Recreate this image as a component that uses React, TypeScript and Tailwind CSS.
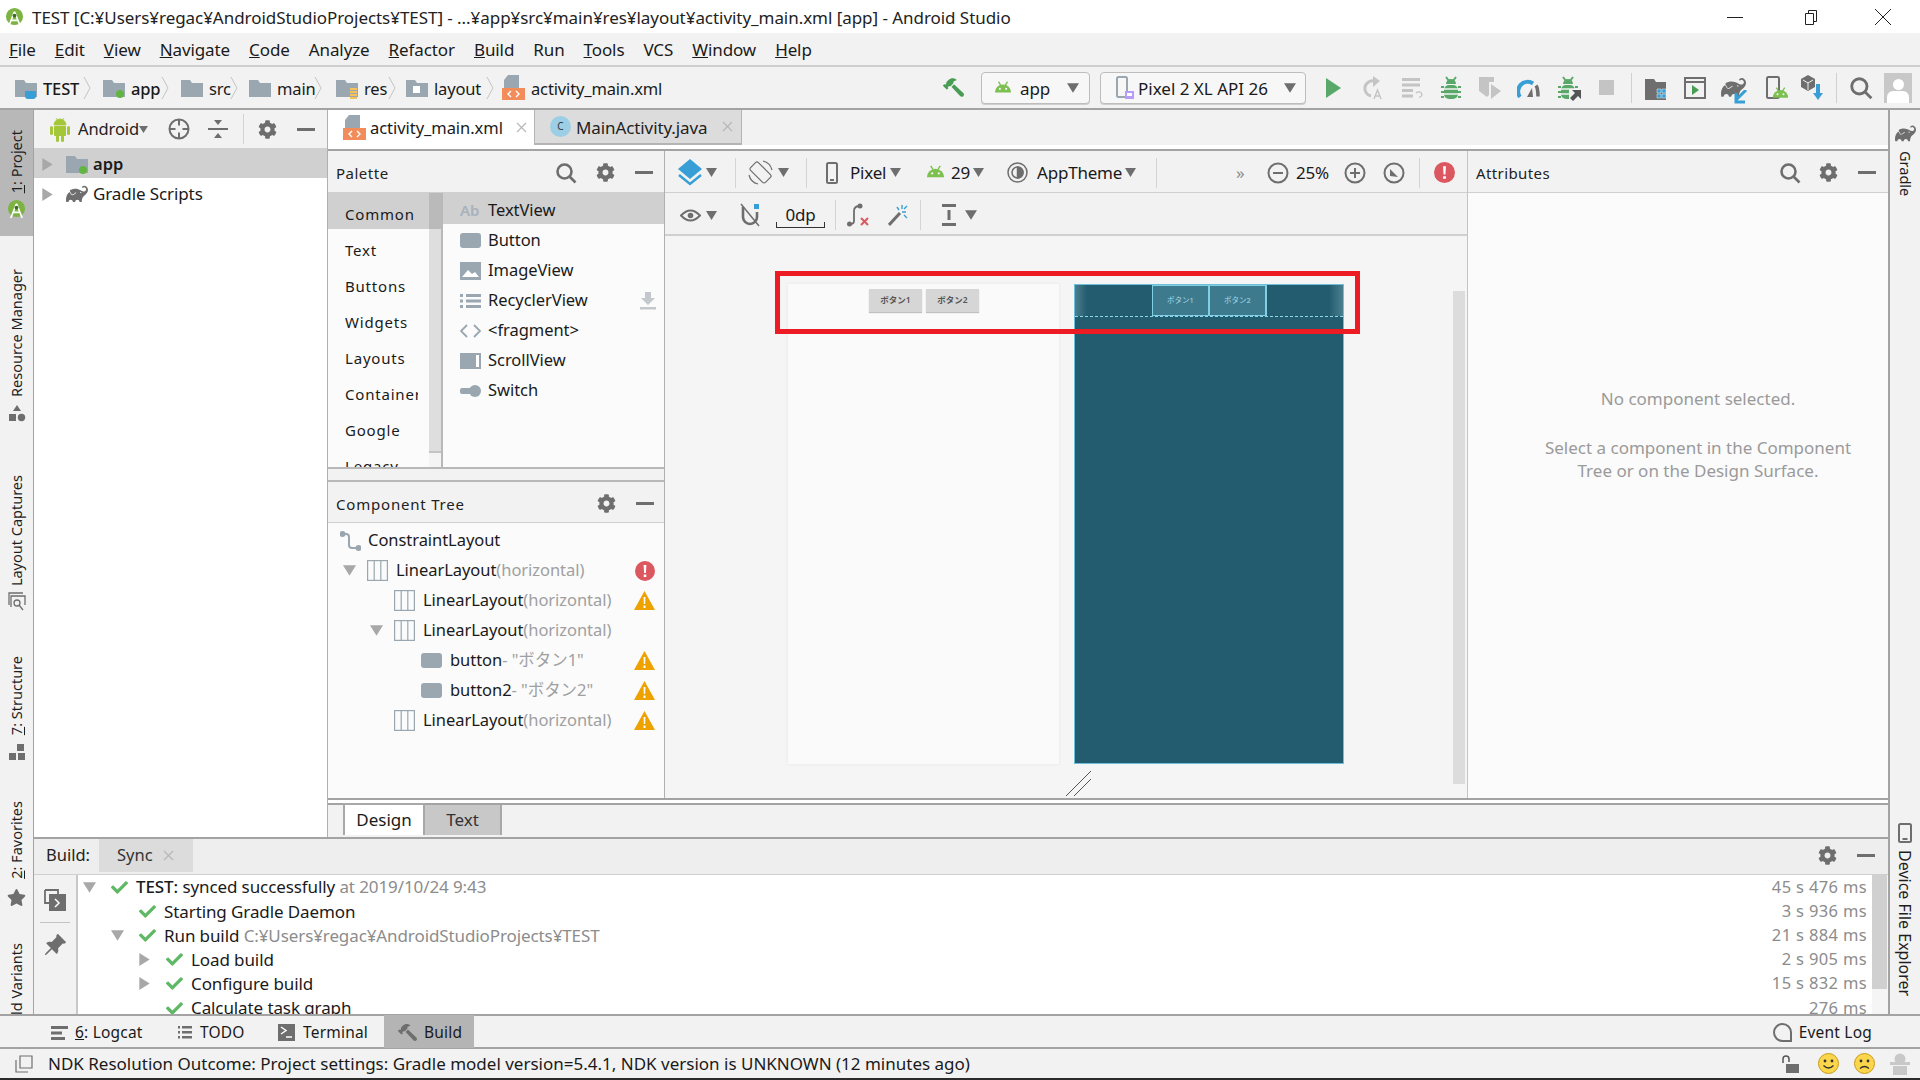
import { FaCog, FaHammer, FaStar, FaCheck } from 'react-icons/fa'
import { BsPinAngleFill } from 'react-icons/bs'
import { SiGradle } from 'react-icons/si'

const gray = '#6e6e6e'
const iconGray = '#9aa7b0'

function Tri({ dir = 'down', size = 10, color = '#6e6e6e', className = '' }: { dir?: 'down' | 'right'; size?: number; color?: string; className?: string }) {
  return (
    <svg width={size} height={size} viewBox="0 0 10 10" className={`shrink-0 ${className}`}>
      <path d={dir === 'down' ? 'M0 1h10L5 9z' : 'M1 0l8 5-8 5z'} fill={color} />
    </svg>
  )
}

function Gear({ size = 19, className = '' }: { size?: number; className?: string }) {
  return <FaCog size={size} color={gray} className={`shrink-0 ${className}`} />
}

function Minus({ className = '' }: { className?: string }) {
  return <div className={`h-[3px] w-[18px] shrink-0 bg-[#6e6e6e] ${className}`} />
}

function Search({ size = 22, className = '' }: { size?: number; className?: string }) {
  return (
    <svg width={size} height={size} viewBox="0 0 22 22" fill="none" stroke="#6e6e6e" strokeWidth="2.6" className={`shrink-0 ${className}`}>
      <circle cx="9.5" cy="9.5" r="7" />
      <path d="M14.5 14.5l6 6" />
    </svg>
  )
}

function Folder({ dot, cup, stack, square }: { dot?: boolean; cup?: boolean; stack?: boolean; square?: boolean }) {
  return (
    <svg width="22" height="22" viewBox="0 0 22 22" className="shrink-0">
      <path d="M0 3h9l2 3h11v14H0z" fill={iconGray} />
      {dot && <circle cx="17" cy="17" r="4" fill="#62b543" />}
      {cup && <path d="M10 14h11v5a3 3 0 0 1-3 3h-5a3 3 0 0 1-3-3z" fill="#389fd6" />}
      {stack && <path d="M14 11h7v2h-7zM14 14h7v2h-7zM14 17h7v2h-7zM14 20h7v2h-7z" fill="#f4c15a" />}
      {square && <rect x="7" y="9" width="7" height="7" fill="#fff" />}
    </svg>
  )
}

function XmlIcon() {
  return (
    <svg width="23" height="25" viewBox="0 0 23 25" className="shrink-0">
      <path d="M6 0h11v13H2V5z" fill={iconGray} />
      <rect x="0" y="13" width="23" height="12" fill="#f28c5a" />
      <path d="M9 16l-3 3 3 3M14 16l3 3-3 3" stroke="#fff" strokeWidth="1.4" fill="none" />
    </svg>
  )
}

function Droid({ size = 20 }: { size?: number }) {
  return (
    <svg width={size} height={size} viewBox="0 0 20 20" className="shrink-0">
      <path d="M1 15a9 9 0 0 1 18 0z" fill="#7cc04f" />
      <path d="M5 3l2.5 4M15 3l-2.5 4" stroke="#7cc04f" strokeWidth="1.5" />
      <circle cx="6.5" cy="11" r="1.2" fill="#f2f2f2" />
      <circle cx="13.5" cy="11" r="1.2" fill="#f2f2f2" />
    </svg>
  )
}

function Robot() {
  return (
    <svg width="20" height="25" viewBox="0 0 20 25" fill="#a4c639" className="shrink-0">
      <path d="M4 8a6 6 0 0 1 12 0zM6 1l2 3M14 1l-2 3" stroke="#a4c639" strokeWidth=".8" />
      <rect x="4" y="9" width="12" height="10" rx="1" />
      <rect x="0" y="9" width="3" height="9" rx="1.5" />
      <rect x="17" y="9" width="3" height="9" rx="1.5" />
      <rect x="6" y="18" width="3" height="7" rx="1.5" />
      <rect x="11" y="18" width="3" height="7" rx="1.5" />
    </svg>
  )
}

function Bug() {
  return (
    <svg width="20" height="24" viewBox="0 0 20 24" fill="#59a869" className="shrink-0">
      <path d="M5 1l3 4M15 1l-3 4" stroke="#59a869" strokeWidth="2" />
      <path d="M5 8a5 5 0 0 1 10 0z" />
      <rect x="3" y="9" width="14" height="14" rx="5" />
      <path d="M3 13h14M3 18h14" stroke="#f2f2f2" strokeWidth="1.6" />
      <path d="M0 11h3M0 16h3M0 21h3M17 11h3M17 16h3M17 21h3" stroke="#59a869" strokeWidth="2" />
    </svg>
  )
}

function Studio({ size = 20 }: { size?: number }) {
  return (
    <svg width={size} height={size} viewBox="0 0 20 20" className="shrink-0">
      <circle cx="10" cy="9" r="9" fill="#7cb342" />
      <path d="M10 4L4 19M10 4l6 15M6 13h8" stroke="#fff" strokeWidth="1.8" fill="none" />
      <circle cx="10" cy="8" r="2" fill="#3d6b22" />
    </svg>
  )
}

function Err({ size = 20 }: { size?: number }) {
  return (
    <svg width={size} height={size} viewBox="0 0 20 20" className="shrink-0">
      <circle cx="10" cy="10" r="10" fill="#db5860" />
      <path d="M8.6 4h2.8l-.5 8H9.1zM8.7 13.5h2.6V16H8.7z" fill="#fff" />
    </svg>
  )
}

function Warn() {
  return (
    <svg width="21" height="19" viewBox="0 0 21 19" className="shrink-0">
      <path d="M10.5 0L21 19H0z" fill="#eda200" />
      <path d="M9.5 6h2l-.3 7H9.8zM9.5 14.5h2V17h-2z" fill="#fff" />
    </svg>
  )
}

function Linear() {
  return (
    <svg width="21" height="21" viewBox="0 0 21 21" fill="none" stroke={iconGray} strokeWidth="1.2" className="shrink-0">
      <rect x="0.6" y="0.6" width="19.8" height="19.8" />
      <path d="M7.2 0.6v19.8M13.8 0.6v19.8" />
    </svg>
  )
}

function Btn() {
  return <div className="h-[15px] w-[21px] shrink-0 rounded-[3px] bg-[#9aa7b0]" />
}

function Smile({ sad }: { sad?: boolean }) {
  return (
    <svg width="21" height="21" viewBox="0 0 21 21" className="shrink-0">
      <circle cx="10.5" cy="10.5" r="10" fill="#fbd64b" stroke="#c79a1c" />
      <circle cx="7" cy="8" r="1.4" fill="#333" />
      <circle cx="14" cy="8" r="1.4" fill="#333" />
      <path d={sad ? 'M6 15.5q4.5-4 9 0' : 'M5.5 12.5q5 5 10 0'} stroke="#333" strokeWidth="1.3" fill="none" />
    </svg>
  )
}

function Close({ className = '' }: { className?: string }) {
  return (
    <svg width="11" height="11" viewBox="0 0 11 11" stroke="#b8b8b8" strokeWidth="1.2" className={`shrink-0 ${className}`}>
      <path d="M1 1l9 9M10 1l-9 9" />
    </svg>
  )
}

function Slot({ children, className = '' }: { children: React.ReactNode; className?: string }) {
  return <div className={`flex h-full w-[39px] shrink-0 items-center justify-center ${className}`}>{children}</div>
}

function Crumb({ icon, label, bold, w }: { icon: React.ReactNode; label: string; bold?: boolean; w: string }) {
  return (
    <div className={`flex shrink-0 items-center gap-[6px] ${w}`}>
      {icon}
      <span className={`whitespace-nowrap pt-[3px] text-[16.5px] tracking-[-0.15px] text-[#1a1a1a] ${bold ? 'font-medium' : ''}`}>{label}</span>
    </div>
  )
}

function Chevron() {
  return (
    <svg width="8" height="24" viewBox="0 0 8 24" fill="none" stroke="#c4c4c4" className="shrink-0">
      <path d="M1 1l6 11-6 11" />
    </svg>
  )
}

function SideLabel({ text, u, className = '' }: { text: string; u?: string; className?: string }) {
  return (
    <span className={`shrink-0 rotate-180 whitespace-nowrap pr-[1px] text-[14.5px] text-[#1e1e1e] [writing-mode:vertical-rl] ${className}`}>
      {u && <span className="underline">{u}</span>}
      {text}
    </span>
  )
}

const menus: [string, string][] = [
  ['F', 'ile'], ['E', 'dit'], ['V', 'iew'], ['N', 'avigate'], ['C', 'ode'], ['', 'Analyze'],
  ['R', 'efactor'], ['B', 'uild'], ['', 'Run'], ['T', 'ools'], ['', 'VCS'], ['W', 'indow'], ['H', 'elp'],
]

const categories = ['Common', 'Text', 'Buttons', 'Widgets', 'Layouts', 'Containers', 'Google', 'Legacy']

const buildRows = [
  { pad: 'pl-[5px]', arrow: 'down', time: '45 s 476 ms', label: <><span className="font-medium">TEST:</span> synced successfully <span className="text-[#8c8c8c]">at 2019/10/24 9:43</span></> },
  { pad: 'pl-[33px]', arrow: '', time: '3 s 936 ms', label: <>Starting Gradle Daemon</> },
  { pad: 'pl-[33px]', arrow: 'down', time: '21 s 884 ms', label: <>Run build <span className="text-[#8c8c8c]">C:¥Users¥regac¥AndroidStudioProjects¥TEST</span></> },
  { pad: 'pl-[60px]', arrow: 'right', time: '2 s 905 ms', label: <>Load build</> },
  { pad: 'pl-[60px]', arrow: 'right', time: '15 s 832 ms', label: <>Configure build</> },
  { pad: 'pl-[60px]', arrow: '', time: '276 ms', label: <>Calculate task graph</> },
]

export default function App() {
  return (
    <div className="flex h-[1080px] w-[1920px] flex-col overflow-hidden bg-[#f2f2f2] font-['Noto_Sans','Noto_Sans_CJK_JP',sans-serif] text-[#1a1a1a]">
      {/* title bar */}
      <div className="flex h-[33px] shrink-0 items-center bg-white pt-[1px]">
        <div className="ml-[5px] w-[27px]"><Studio size={19} /></div>
        <span className="whitespace-nowrap pt-[1px] text-[17px] tracking-[-0.05px] text-[#222]">
          TEST [C:¥Users¥regac¥AndroidStudioProjects¥TEST] - ...¥app¥src¥main¥res¥layout¥activity_main.xml [app] - Android Studio
        </span>
        <div className="ml-auto flex items-center">
          <div className="mr-[60px] h-px w-[16px] bg-[#222]" />
          <svg width="16" height="16" viewBox="0 0 16 16" fill="none" stroke="#222" className="mr-[55px]">
            <path d="M2.5 4.5h8v11h-8zM5.5 4.5v-3h8v11h-3" />
          </svg>
          <svg width="18" height="18" viewBox="0 0 18 18" stroke="#222" className="mr-[28px]">
            <path d="M1 1l16 16M17 1L1 17" />
          </svg>
        </div>
      </div>

      {/* menu bar */}
      <div className="flex h-[34px] shrink-0 items-center border-b-2 border-[#cfcfcf] pl-[9px] pt-[2px] text-[17px] tracking-[-0.1px]">
        {menus.map(([u, rest]) => (
          <span key={rest} className="mr-[19px] whitespace-nowrap">
            {u && <span className="underline">{u}</span>}
            {rest}
          </span>
        ))}
      </div>

      {/* nav bar */}
      <div className="flex h-[43px] shrink-0 items-center border-b-2 border-[#a3a3a3] pl-[15px]">
        <Crumb w="w-[68px]" bold label="TEST" icon={<Folder cup />} />
        <Chevron />
        <div className="w-[12px]" />
        <Crumb w="w-[58px]" bold label="app" icon={<Folder dot />} />
        <Chevron />
        <div className="w-[12px]" />
        <Crumb w="w-[49px]" label="src" icon={<Folder />} />
        <Chevron />
        <div className="w-[11px]" />
        <Crumb w="w-[65px]" label="main" icon={<Folder />} />
        <Chevron />
        <div className="w-[14px]" />
        <Crumb w="w-[52px]" label="res" icon={<Folder stack />} />
        <Chevron />
        <div className="w-[10px]" />
        <Crumb w="w-[80px]" label="layout" icon={<Folder square />} />
        <Chevron />
        <div className="w-[8px]" />
        <Crumb w="w-[160px]" label="activity_main.xml" icon={<XmlIcon />} />

        <div className="ml-auto flex h-full items-center">
          <Slot className="!w-[36px]"><FaHammer size={21} color="#499c54" className="-scale-x-100" /></Slot>
          <div className="ml-[10px] flex h-[32px] w-[109px] items-center rounded-[4px] border border-[#bdbdbd] bg-[#f7f7f7] pl-[12px] pr-[10px] shadow-[0_1px_0_#cfcfcf]">
            <Droid size={18} />
            <span className="ml-[8px] pt-[2px] text-[17px] tracking-[-0.1px]">app</span>
            <Tri className="ml-auto" size={12} />
          </div>
          <div className="ml-[10px] flex h-[32px] w-[206px] items-center rounded-[4px] border border-[#bdbdbd] bg-[#f7f7f7] pl-[15px] pr-[9px] shadow-[0_1px_0_#cfcfcf]">
            <svg width="18" height="24" viewBox="0 0 18 24" className="shrink-0">
              <rect x="1" y="1" width="10" height="20" rx="1.5" fill="none" stroke={iconGray} strokeWidth="2" />
              <rect x="9" y="15" width="9" height="8" fill="#b99bf8" />
              <rect x="11" y="17" width="5" height="3" fill="#fff" />
            </svg>
            <span className="ml-[4px] whitespace-nowrap pt-[2px] text-[17px]">Pixel 2 XL API 26</span>
            <Tri className="ml-auto" size={12} />
          </div>
          <Slot className="ml-[8px]">
            <svg width="15" height="22" viewBox="0 0 15 22"><path d="M0 1l15 10L0 21z" fill="#59a869" /></svg>
          </Slot>
          <Slot>
            <svg width="22" height="24" viewBox="0 0 22 24" fill="none" stroke="#c4c4c4" strokeWidth="3">
              <path d="M12 5a7.500 7.500 0 0 0-3 15" />
              <path d="M11 0l7 5-7 6z" fill="#c4c4c4" stroke="none" />
              <path d="M12 23l3.500-9 3.500 9M13 20h5" strokeWidth="1.400" />
            </svg>
          </Slot>
          <Slot>
            <svg width="22" height="20" viewBox="0 0 22 20" fill="#c4c4c4">
              <path d="M1 0h18v3H1zM1 5.500h18v3H1zM1 11h11v3H1zM1 16.500h11v3H1z" />
              <path d="M15 15a3.500 3.500 0 0 1 6 1.500q0 2-3 3" stroke="#c4c4c4" fill="none" strokeWidth="1.200" />
            </svg>
          </Slot>
          <Slot><Bug /></Slot>
          <Slot>
            <svg width="24" height="24" viewBox="0 0 24 24" fill="#c4c4c4">
              <path d="M1 1h15v5h-5v13l-2 2-8-6z" />
              <path d="M13 8l10 7-10 8z" />
            </svg>
          </Slot>
          <Slot>
            <svg width="24" height="20" viewBox="0 0 24 20" fill="none">
              <path d="M3 19a9.500 9.500 0 0 1 13-13.500" stroke="#389fd6" strokeWidth="4" />
              <path d="M19 7.500q2 3 2 11" stroke="#6e6e6e" strokeWidth="3.500" />
              <path d="M10 19l5-9 1 9z" fill="#6e6e6e" />
            </svg>
          </Slot>
          <Slot>
            <div className="relative flex">
              <Bug />
              <svg width="13" height="13" viewBox="0 0 13 13" className="absolute -bottom-[2px] -right-[4px]">
                <rect width="13" height="13" fill="#f2f2f2" />
                <path d="M3 1h9v9L9 7l-5 5-3-3 5-5z" fill="#555" />
              </svg>
            </div>
          </Slot>
          <Slot><div className="h-[15px] w-[15px] bg-[#c4c4c4]" /></Slot>
          <div className="ml-[5px] h-[30px] w-px bg-[#d0d0d0]" />
          <Slot className="ml-[4px]">
            <svg width="24" height="24" viewBox="0 0 24 24">
              <path d="M1 3h9l2 3h10v18H1z" fill="#6e6e6e" />
              <path d="M13 13h4v4h-4zM18 13h4v4h-4zM13 18h4v4h-4zM18 18h4v4h-4z" fill="#389fd6" stroke="#f2f2f2" strokeWidth=".5" />
            </svg>
          </Slot>
          <Slot>
            <svg width="24" height="24" viewBox="0 0 24 24" fill="none" stroke="#6e6e6e" strokeWidth="2">
              <rect x="2" y="2" width="20" height="20" />
              <path d="M2 6h20" />
              <path d="M9 9l7 5-7 5z" fill="#499c54" stroke="none" />
            </svg>
          </Slot>
          <Slot>
            <div className="relative flex">
              <SiGradle size={25} color="#6e6e6e" />
              <svg width="14" height="14" viewBox="0 0 14 14" className="absolute -bottom-[4px] -right-[2px]">
                <path d="M12 0L2 10M2 3v9h9" fill="none" stroke="#389fd6" strokeWidth="3" />
              </svg>
            </div>
          </Slot>
          <Slot>
            <div className="relative flex">
              <svg width="14" height="24" viewBox="0 0 14 24" fill="none" stroke="#6e6e6e" strokeWidth="2">
                <rect x="1" y="1" width="12" height="21" rx="1.5" />
              </svg>
              <div className="absolute -bottom-[2px] -right-[9px]"><Droid size={17} /></div>
            </div>
          </Slot>
          <Slot>
            <svg width="24" height="28" viewBox="0 0 24 28">
              <path d="M8 1l7 4v8l-7 4-7-4V5z" fill="#6e6e6e" />
              <path d="M3 6l5 3 5-3M8 9v7" stroke="#f2f2f2" fill="none" />
              <path d="M16 10h4v9h3l-5 7-5-7h3z" fill="#389fd6" />
            </svg>
          </Slot>
          <div className="ml-[5px] h-[30px] w-px bg-[#d0d0d0]" />
          <Slot className="ml-[4px]"><Search size={24} /></Slot>
          <div className="ml-[4px] mr-[8px] flex h-[30px] w-[28px] flex-col items-center justify-end overflow-hidden bg-[#c8c8c8]">
            <div className="h-[11px] w-[11px] rounded-full bg-white" />
            <div className="mt-[1px] h-[12px] w-[22px] rounded-t-[6px] bg-white" />
          </div>
        </div>
      </div>

      {/* main */}
      <div className="flex h-[904px] shrink-0">
        {/* left tool strip */}
        <div className="flex w-[34px] shrink-0 flex-col items-center overflow-hidden border-r border-[#a3a3a3]">
          <div className="flex h-[126px] w-full shrink-0 flex-col items-center bg-[#b8b8b8] pt-[20px]">
            <SideLabel text=": Project" u="1" />
            <div className="mt-[7px]"><Studio size={19} /></div>
          </div>
          <SideLabel text="Resource Manager" className="mt-[33px]" />
          <svg width="18" height="18" viewBox="0 0 18 18" fill={gray} className="mt-[8px] shrink-0">
            <path d="M9 0l4 6H5zM1 9h7v7H1z" /><circle cx="13.5" cy="12.5" r="3.7" />
          </svg>
          <SideLabel text="Layout Captures" className="mt-[52px]" />
          <svg width="18" height="20" viewBox="0 0 18 20" fill="none" stroke={gray} strokeWidth="1.3" className="mt-[6px] shrink-0">
            <path d="M1 13V1h14M3 15V4h14v9" /><circle cx="9" cy="11" r="3" /><path d="M11 13l4 5" />
          </svg>
          <SideLabel text=": Structure" u="7" className="mt-[44px]" />
          <svg width="16" height="16" viewBox="0 0 16 16" fill={gray} className="mt-[9px] shrink-0">
            <path d="M8 0h7v7H8zM0 9h7v7H0zM9 9h7v7H9z" />
          </svg>
          <SideLabel text=": Favorites" u="2" className="mt-[41px]" />
          <FaStar size={19} color={gray} className="mt-[9px] shrink-0" />
          <SideLabel text="Build Variants" className="mt-[36px]" />
        </div>

        {/* center */}
        <div className="flex min-w-0 flex-1 flex-col">
          <div className="flex h-[727px] shrink-0">
            {/* project panel */}
            <div className="flex w-[294px] shrink-0 flex-col border-r border-[#b0b0b0] bg-white">
              <div className="flex h-[38px] shrink-0 items-center bg-[#f2f2f2]">
                <div className="ml-[16px] flex"><Robot /></div>
                <span className="ml-[8px] w-[64px] pt-[1px] text-[16.5px] tracking-[-0.1px] text-[#222]">Android</span>
                <Tri className="-ml-[3px]" size={9} />
                <svg width="22" height="22" viewBox="0 0 22 22" fill="none" stroke={gray} strokeWidth="2" className="ml-[20px] shrink-0">
                  <circle cx="11" cy="11" r="9.5" /><path d="M11 1.5v6M11 14.5v6M1.5 11h6M14.5 11h6" />
                </svg>
                <svg width="20" height="20" viewBox="0 0 20 20" fill={gray} className="ml-[18px] shrink-0">
                  <path d="M0 9h20v2H0zM6 1h8l-4 5zM6 19h8l-4-5z" />
                </svg>
                <div className="ml-[15px] h-[30px] w-px bg-[#d4d4d4]" />
                <Gear className="ml-[14px]" />
                <Minus className="ml-[20px]" />
              </div>
              <div className="flex h-[30px] items-center bg-[#d0d0d0] pl-[7px] pt-[2px]">
                <Tri dir="right" size={13} color="#a8a8a8" />
                <div className="ml-[12px]"><Folder dot /></div>
                <span className="ml-[5px] text-[16.5px] font-semibold">app</span>
              </div>
              <div className="flex h-[30px] items-center pl-[7px] pt-[2px]">
                <Tri dir="right" size={13} color="#a8a8a8" />
                <div className="ml-[12px] flex w-[22px]"><SiGradle size={22} color="#6e6e6e" /></div>
                <span className="ml-[5px] text-[17px] tracking-[-0.1px]">Gradle Scripts</span>
              </div>
            </div>

            {/* editor */}
            <div className="flex min-w-0 flex-1 flex-col">
              <div className="flex h-[41px] shrink-0 flex-col">
                <div className="flex h-[35px] shrink-0">
                  <div className="flex w-[206px] items-center bg-white pl-[15px]">
                    <XmlIcon />
                    <span className="ml-[4px] pt-[2px] text-[16.5px] tracking-[-0.05px]">activity_main.xml</span>
                    <Close className="ml-[13px]" />
                  </div>
                  <div className="flex w-[208px] items-center border-x border-b-2 border-[#b4b4b4] bg-[#dcdcdc] pl-[15px]">
                    <div className="flex h-[21px] w-[21px] items-center justify-center rounded-full bg-[#9ccfe6] text-[10px] text-[#333]">C</div>
                    <span className="ml-[5px] pt-[2px] text-[17px] tracking-[-0.1px] text-[#222]">MainActivity.java</span>
                    <Close className="ml-[14px]" />
                  </div>
                </div>
                <div className="h-[6px] border-b-2 border-[#a3a3a3] bg-white" />
              </div>

              <div className="flex h-[647px] shrink-0">
                {/* palette + tree */}
                <div className="flex w-[337px] shrink-0 flex-col border-r border-[#b0b0b0]">
                  <div className="flex h-[42px] shrink-0 items-center border-b border-[#cfcfcf] pl-[8px] pt-[2px]">
                    <span className="mt-[2px] w-[219px] text-[15px] tracking-[0.5px] text-[#222]">Palette</span>
                    <Search />
                    <Gear className="ml-[19px]" />
                    <Minus className="ml-[20px]" />
                  </div>
                  <div className="flex h-[274px] shrink-0 overflow-hidden bg-[#fbfbfb]">
                    <div className="w-[101px] shrink-0">
                      {categories.map((c, i) => (
                        <div key={c} className={`flex h-[36px] items-center overflow-hidden pl-[17px] pt-[7px] text-[15px] tracking-[0.8px] ${i === 0 ? 'bg-[#d0d0d0]' : ''}`}>
                          <span className={`block whitespace-nowrap ${c === 'Containers' ? 'w-[73px] overflow-hidden' : ''}`}>{c}</span>
                        </div>
                      ))}
                    </div>
                    <div className="w-[14px] shrink-0 border-r-2 border-[#b8b8b8] bg-[#f4f4f4]">
                      <div className="h-[36px] bg-[#bababa]" />
                      <div className="h-[224px] border-b-2 border-[#c4c4c4] bg-[#dedede]" />
                    </div>
                    <div className="min-w-0 flex-1 text-[16.5px] tracking-[-0.05px]">
                      <div className="flex h-[30.500px] items-center bg-[#d0d0d0] pl-[17px] pt-[4px]">
                        <span className="w-[28px] text-[15px] font-semibold text-[#a8b2bc]">Ab</span>TextView
                      </div>
                      <div className="flex h-[30px] items-center pl-[17px] pt-[4px]">
                        <span className="w-[28px]"><Btn /></span>Button
                      </div>
                      <div className="flex h-[30px] items-center pl-[17px] pt-[4px]">
                        <svg width="28" height="20" viewBox="0 0 28 20" className="shrink-0">
                          <rect width="21" height="18" y="1" fill={iconGray} />
                          <path d="M2 16l6-7 4 4 3-2 4 5z" fill="#fff" />
                        </svg>
                        ImageView
                      </div>
                      <div className="flex h-[30px] items-center pl-[17px] pt-[4px]">
                        <svg width="28" height="16" viewBox="0 0 28 16" fill={iconGray} className="shrink-0">
                          <path d="M0 1h3v3H0zM6 1h15v3H6zM0 6.500h3v3H0zM6 6.500h15v3H6zM0 12h3v3H0zM6 12h15v3H6z" />
                        </svg>
                        RecyclerView
                        <svg width="16" height="18" viewBox="0 0 16 18" fill="#c4c8cc" className="ml-auto mr-[8px] shrink-0">
                          <path d="M5 0h6v6h4l-7 7-7-7h4zM0 15h16v2.500H0z" />
                        </svg>
                      </div>
                      <div className="flex h-[30px] items-center pl-[17px] pt-[4px]">
                        <svg width="28" height="14" viewBox="0 0 28 14" fill="none" stroke={iconGray} strokeWidth="1.8" className="shrink-0">
                          <path d="M7 1L1 7l6 6M14 1l6 6-6 6" />
                        </svg>
                        {'<fragment>'}
                      </div>
                      <div className="flex h-[30px] items-center pl-[17px] pt-[4px]">
                        <svg width="28" height="16" viewBox="0 0 28 16" className="shrink-0">
                          <rect width="21" height="16" fill={iconGray} />
                          <rect x="16" y="2" width="3" height="12" fill="#fff" />
                        </svg>
                        ScrollView
                      </div>
                      <div className="flex h-[30px] items-center pl-[17px] pt-[4px]">
                        <svg width="28" height="12" viewBox="0 0 28 12" fill={iconGray} className="shrink-0">
                          <rect y="3" width="12" height="6" rx="2" />
                          <circle cx="15" cy="6" r="6" />
                        </svg>
                        Switch
                      </div>
                    </div>
                  </div>
                  <div className="h-[15px] shrink-0 border-y-2 border-[#b8b8b8]" />
                  <div className="flex h-[41px] shrink-0 items-center border-b border-[#cfcfcf] pl-[8px] pt-[2px]">
                    <span className="mt-[2px] w-[261px] whitespace-nowrap text-[15px] tracking-[0.8px] text-[#222]">Component Tree</span>
                    <Gear />
                    <Minus className="ml-[20px]" />
                  </div>
                  <div className="min-h-0 flex-1 bg-[#fbfbfb] text-[16.5px] tracking-[-0.05px]">
                    <div className="flex h-[30px] items-center pl-[12px] pt-[5px]">
                      <svg width="21" height="20" viewBox="0 0 21 20" fill="none" stroke={iconGray} strokeWidth="2" className="shrink-0">
                        <circle cx="2.500" cy="3" r="2" fill={iconGray} /><circle cx="18.500" cy="17" r="2" fill={iconGray} />
                        <path d="M3 3h3q3 0 3 3v8q0 3 3 3h6" />
                      </svg>
                      <span className="ml-[7px]">ConstraintLayout</span>
                    </div>
                    <div className="flex h-[30px] items-center pl-[15px] pt-[5px]">
                      <Tri size={13} color="#a8a8a8" />
                      <span className="ml-[11px]"><Linear /></span>
                      <span className="ml-[8px]">LinearLayout<span className="text-[#a0a0a0]">(horizontal)</span></span>
                      <span className="ml-auto mr-[9px]"><Err /></span>
                    </div>
                    <div className="flex h-[30px] items-center pl-[66px] pt-[5px]">
                      <Linear />
                      <span className="ml-[8px]">LinearLayout<span className="text-[#a0a0a0]">(horizontal)</span></span>
                      <span className="ml-auto mr-[9px]"><Warn /></span>
                    </div>
                    <div className="flex h-[30px] items-center pl-[42px] pt-[5px]">
                      <Tri size={13} color="#a8a8a8" />
                      <span className="ml-[11px]"><Linear /></span>
                      <span className="ml-[8px]">LinearLayout<span className="text-[#a0a0a0]">(horizontal)</span></span>
                    </div>
                    <div className="flex h-[30px] items-center pl-[93px] pt-[5px]">
                      <Btn />
                      <span className="ml-[8px]">button<span className="text-[#a0a0a0]">- "ボタン1"</span></span>
                      <span className="ml-auto mr-[9px]"><Warn /></span>
                    </div>
                    <div className="flex h-[30px] items-center pl-[93px] pt-[5px]">
                      <Btn />
                      <span className="ml-[8px]">button2<span className="text-[#a0a0a0]">- "ボタン2"</span></span>
                      <span className="ml-auto mr-[9px]"><Warn /></span>
                    </div>
                    <div className="flex h-[30px] items-center pl-[66px] pt-[5px]">
                      <Linear />
                      <span className="ml-[8px]">LinearLayout<span className="text-[#a0a0a0]">(horizontal)</span></span>
                      <span className="ml-auto mr-[9px]"><Warn /></span>
                    </div>
                  </div>
                </div>

                {/* design surface */}
                <div className="flex w-[803px] shrink-0 flex-col border-r border-[#c4c4c4]">
                  <div className="flex h-[42px] shrink-0 items-center border-b border-[#cfcfcf] pt-[2px] text-[17px] tracking-[-0.2px]">
                    <svg width="24" height="27" viewBox="0 0 24 27" className="ml-[13px] shrink-0">
                      <path d="M12 0l12 10-12 10L0 10z" fill="#389fd6" />
                      <path d="M1 16l11 9 11-9" fill="none" stroke="#389fd6" strokeWidth="2.500" />
                    </svg>
                    <Tri className="ml-[4px]" size={11} />
                    <div className="ml-[18px] h-[30px] w-px bg-[#d4d4d4]" />
                    <svg width="25" height="25" viewBox="0 0 25 25" fill="none" stroke={gray} strokeWidth="1.200" className="ml-[12px] shrink-0">
                      <rect x="7" y="2" width="11" height="21" rx="2" transform="rotate(-45 12.500 12.500)" />
                      <path d="M15 1a12 12 0 0 1 9 9M10 24a12 12 0 0 1-9-9" />
                    </svg>
                    <Tri className="ml-[5px]" size={11} />
                    <div className="ml-[17px] h-[30px] w-px bg-[#d4d4d4]" />
                    <svg width="12" height="22" viewBox="0 0 12 22" fill="none" stroke={gray} strokeWidth="2" className="ml-[19px] shrink-0">
                      <rect x="1" y="1" width="10" height="20" rx="1.500" /><path d="M4 18h4" />
                    </svg>
                    <span className="ml-[12px] w-[40px]">Pixel</span>
                    <Tri size={11} />
                    <div className="ml-[25px]"><Droid size={19} /></div>
                    <span className="ml-[6px] w-[22px]">29</span>
                    <Tri size={11} />
                    <svg width="21" height="21" viewBox="0 0 21 21" fill="none" stroke={gray} strokeWidth="1.5" className="ml-[23px] shrink-0">
                      <circle cx="10.500" cy="10.500" r="9.500" /><path d="M10.500 5a5.500 5.500 0 0 1 0 11z" fill={gray} /><circle cx="10.500" cy="10.500" r="5.500" />
                    </svg>
                    <span className="ml-[9px] w-[88px] whitespace-nowrap">AppTheme</span>
                    <Tri size={11} />
                    <div className="ml-[20px] h-[30px] w-px bg-[#d4d4d4]" />
                    <span className="ml-[79px] w-[12px] text-[17px] text-[#8c8c8c]">»</span>
                    <svg width="22" height="22" viewBox="0 0 22 22" fill="none" stroke={gray} strokeWidth="2" className="ml-[19px] shrink-0">
                      <circle cx="11" cy="11" r="9.500" /><path d="M6 11h10" />
                    </svg>
                    <span className="ml-[7px] w-[43px] whitespace-nowrap">25%</span>
                    <svg width="22" height="22" viewBox="0 0 22 22" fill="none" stroke={gray} strokeWidth="2" className="ml-[5px] shrink-0">
                      <circle cx="11" cy="11" r="9.500" /><path d="M6 11h10M11 6v10" />
                    </svg>
                    <svg width="22" height="22" viewBox="0 0 22 22" fill="none" stroke={gray} strokeWidth="2" className="ml-[17px] shrink-0">
                      <circle cx="11" cy="11" r="9.500" /><path d="M7 7l8 8-8-1z" fill={gray} stroke="none" />
                    </svg>
                    <div className="ml-[14px] h-[30px] w-px bg-[#d4d4d4]" />
                    <div className="ml-[14px]"><Err size={21} /></div>
                  </div>
                  <div className="flex h-[43px] shrink-0 items-center border-b-2 border-[#d0d0d0] pt-[3px]">
                    <svg width="21" height="15" viewBox="0 0 21 15" fill="none" stroke={gray} strokeWidth="2" className="ml-[15px] shrink-0">
                      <path d="M1 7.500q9.500-10 19 0-9.500 10-19 0z" />
                      <circle cx="10.500" cy="7.500" r="2.800" fill={gray} stroke="none" />
                    </svg>
                    <Tri className="ml-[5px]" size={11} />
                    <svg width="22" height="24" viewBox="0 0 22 24" fill="none" stroke={gray} strokeWidth="2.600" className="ml-[23px] shrink-0">
                      <path d="M3 4v10a7 7 0 0 0 14 0V9" /><path d="M1 1l18 22" strokeWidth="1.500" />
                      <path d="M14 1h5v5h-5z" fill="#389fd6" stroke="none" />
                    </svg>
                    <div className="ml-[14px] flex h-[25px] w-[49px] items-end justify-between border-b border-[#333]">
                      <div className="h-[5px] w-px bg-[#333]" />
                      <span className="text-[17px] leading-[24px] tracking-[-0.2px]">0dp</span>
                      <div className="h-[5px] w-px bg-[#333]" />
                    </div>
                    <div className="ml-[10px] h-[30px] w-px bg-[#d4d4d4]" />
                    <svg width="23" height="24" viewBox="0 0 23 24" fill="none" className="ml-[11px] shrink-0">
                      <path d="M2 21h1q4 0 4-3V8q0-5 6-5" stroke={gray} strokeWidth="1.800" />
                      <circle cx="2.500" cy="21" r="2.500" fill={gray} /><circle cx="13" cy="3" r="2.500" fill={gray} />
                      <path d="M14 15l7 7M21 15l-7 7" stroke="#db5860" strokeWidth="2" />
                    </svg>
                    <svg width="20" height="22" viewBox="0 0 20 22" fill="none" className="ml-[18px] shrink-0">
                      <path d="M1 21L12 9" stroke={gray} strokeWidth="3" />
                      <path d="M14 1v4M18 8h-4M9 3l2 3M19 2l-3 3M19 14l-3-3" stroke="#389fd6" strokeWidth="1.400" />
                    </svg>
                    <div className="ml-[12px] h-[30px] w-px bg-[#d4d4d4]" />
                    <svg width="14" height="24" viewBox="0 0 14 24" fill={gray} className="ml-[21px] shrink-0">
                      <path d="M0 1h14v3H0zM5.500 7h3v10h-3zM0 20h14v3H0z" />
                    </svg>
                    <Tri className="ml-[9px]" size={12} />
                  </div>

                  {/* canvas */}
                  <div className="relative flex min-h-0 flex-1 bg-[#f5f5f5] pl-[123px] pt-[48px]">
                    <div className="flex h-[480px] w-[271px] shrink-0 items-start gap-[4px] bg-[#fafafa] pl-[81px] pt-[5px] shadow-[0_0_3px_#e4e4e4]">
                      <div className="flex h-[23px] w-[53px] items-center justify-center bg-[#d6d6d6] text-[8.500px] font-semibold text-[#555] shadow-[0_1px_1px_#c0c0c0]">ボタン1</div>
                      <div className="flex h-[23px] w-[53px] items-center justify-center bg-[#d6d6d6] text-[8.500px] font-semibold text-[#555] shadow-[0_1px_1px_#c0c0c0]">ボタン2</div>
                    </div>
                    <div className="ml-[15px] h-[480px] w-[270px] shrink-0 border border-[#6cbfd6] bg-[#235c6f]">
                      <div className="flex h-[32px] items-stretch border-b border-dashed border-[#8fd8ea]">
                        <div className="w-[12px] bg-gradient-to-r from-[#4a7f90] to-[#235c6f]" />
                        <div className="ml-[65px] flex w-[57px] items-center justify-center border border-[#7fd0e6] bg-[#3e7a8d] text-[7.500px] text-[#a8dcec]">ボタン1</div>
                        <div className="flex w-[57px] items-center justify-center border border-[#7fd0e6] bg-[#3e7a8d] text-[7.500px] text-[#a8dcec]">ボタン2</div>
                        <div className="w-px bg-[#7fd0e6]" />
                        <div className="ml-auto w-[14px] bg-gradient-to-l from-[#4a7f90] to-[#235c6f]" />
                      </div>
                    </div>
                    <div className="ml-auto mr-[2px] mt-[7px] h-[493px] w-[12px] shrink-0 bg-[#dcdcdc]" />
                    <div className="absolute left-[110px] top-[35px] h-[63px] w-[585px] border-[5px] border-[#ed1c24]" />
                    <svg width="27" height="27" viewBox="0 0 27 27" stroke="#555" className="absolute left-[400px] top-[534px]">
                      <path d="M1 26L26 1M9 26L26 9" />
                    </svg>
                  </div>
                </div>

                {/* attributes */}
                <div className="flex min-w-0 flex-1 flex-col">
                  <div className="flex h-[42px] shrink-0 items-center border-b border-[#cfcfcf] pl-[8px] pt-[2px]">
                    <span className="mt-[2px] w-[303px] text-[15px] tracking-[0.4px] text-[#222]">Attributes</span>
                    <Search />
                    <Gear className="ml-[18px]" />
                    <Minus className="ml-[20px]" />
                  </div>
                  <div className="flex min-h-0 flex-1 flex-col items-center bg-[#fbfbfb] pl-[40px] pt-[194px] text-[17px] leading-[23px] text-[#9a9a9a]">
                    <p>No component selected.</p>
                    <p className="mt-[26px] whitespace-nowrap text-center">
                      Select a component in the Component<br />Tree or on the Design Surface.
                    </p>
                  </div>
                </div>
              </div>

              {/* design/text tabs */}
              <div className="h-[7px] shrink-0 border-y-2 border-t-[#a3a3a3] border-b-[#a3a3a3] bg-white" />
              <div className="flex h-[30px] shrink-0 pl-[15px] text-[17px]">
                <div className="-mt-[2px] flex w-[82px] items-center justify-center border-x-2 border-t-2 border-[#a8a8a8] bg-white">Design</div>
                <div className="flex w-[77px] items-center justify-center border-r-2 border-[#a8a8a8] bg-[#c8c8c8] text-[#333]">Text</div>
              </div>
            </div>
          </div>

          {/* build panel */}
          <div className="flex min-h-0 flex-1 flex-col border-t-2 border-[#a3a3a3]">
            <div className="flex h-[36px] shrink-0 items-center border-b border-[#cfcfcf] bg-[#eeeeee] pb-[2px] pl-[12px] text-[16.5px]">
              <span className="w-[53px] text-[#222]">Build:</span>
              <div className="flex h-full w-[94px] items-center bg-[#dcdcdc] pl-[18px]">
                <span className="text-[#333]">Sync</span>
                <Close className="ml-[10px]" />
              </div>
              <Gear className="ml-[1625px]" />
              <Minus className="ml-[20px]" />
            </div>
            <div className="flex min-h-0 flex-1 overflow-hidden">
              <div className="flex w-[44px] shrink-0 flex-col items-center border-r-2 border-[#c8c8c8] pt-[14px]">
                <svg width="22" height="22" viewBox="0 0 22 22" fill="none" className="shrink-0">
                  <path d="M1 1h13v4" stroke={gray} strokeWidth="1.800" />
                  <path d="M1 1v13h4" stroke={gray} strokeWidth="1.800" />
                  <rect x="5" y="5" width="17" height="17" fill={gray} />
                  <path d="M11 10l4 4-4 4" stroke="#fff" strokeWidth="1.500" />
                </svg>
                <div className="mt-[11px] h-px w-[30px] bg-[#c4c4c4]" />
                <BsPinAngleFill size={24} color={gray} className="mt-[10px]" />
              </div>
              <div className="min-w-0 flex-1 overflow-hidden bg-white text-[17px] tracking-[-0.1px]">
                {buildRows.map((r, i) => (
                  <div key={i} className={`flex h-[24.200px] items-center pr-[5px] ${r.pad}`}>
                    <div className="flex w-[28px] shrink-0 items-center">
                      {r.arrow === 'down' && <Tri size={13} color="#a8a8a8" />}
                      {r.arrow === 'right' && <Tri dir="right" size={13} color="#a8a8a8" />}
                    </div>
                    <FaCheck size={17} color="#5fb865" className="mr-[8px] shrink-0" />
                    <span className="whitespace-nowrap">{r.label}</span>
                    <span className="ml-auto whitespace-nowrap text-[16.5px] tracking-[0.35px] text-[#8c8c8c]">{r.time}</span>
                  </div>
                ))}
              </div>
              <div className="w-[16px] shrink-0 bg-[#f5f5f5]">
                <div className="h-[114px] w-[15px] bg-[#d0d0d0]" />
              </div>
            </div>
          </div>
        </div>

        {/* right tool strip */}
        <div className="flex w-[32px] shrink-0 flex-col items-center border-l-2 border-[#a3a3a3] pt-[13px]">
          <SiGradle size={21} color={gray} className="shrink-0" />
          <span className="mt-[7px] whitespace-nowrap text-[14.5px] text-[#1e1e1e] [writing-mode:vertical-rl]">Gradle</span>
          <svg width="14" height="20" viewBox="0 0 14 20" fill="none" stroke={gray} strokeWidth="2" className="mt-[627px] shrink-0">
            <rect x="1" y="1" width="12" height="18" rx="1.500" /><path d="M4.500 16h5" />
          </svg>
          <span className="mt-[7px] whitespace-nowrap text-[16px] text-[#1e1e1e] [writing-mode:vertical-rl]">Device File Explorer</span>
        </div>
      </div>

      {/* tool window bar */}
      <div className="flex h-[35px] shrink-0 items-center border-y-2 border-t-[#a3a3a3] border-b-[#a3a3a3] pt-[2px] text-[15.500px] tracking-[0.2px]">
        <svg width="17" height="14" viewBox="0 0 17 14" fill={gray} className="ml-[51px] shrink-0">
          <path d="M0 0h17v3H0zM0 5.500h11v3H0zM0 11h14v3H0z" />
        </svg>
        <span className="ml-[7px] w-[103px] whitespace-nowrap"><span className="underline">6</span>: Logcat</span>
        <svg width="14" height="13" viewBox="0 0 14 13" fill={gray} className="shrink-0">
          <path d="M0 0h2v2.500H0zM4 0h10v2.500H4zM0 5h2v2.500H0zM4 5h10v2.500H4zM0 10h2v2.500H0zM4 10h10v2.500H4z" />
        </svg>
        <span className="ml-[8px] w-[78px]">TODO</span>
        <svg width="17" height="17" viewBox="0 0 17 17" className="shrink-0">
          <rect width="17" height="17" fill={gray} />
          <path d="M3 3l5 3.500L3 10M8 13h6" stroke="#fff" strokeWidth="1.500" fill="none" />
        </svg>
        <span className="ml-[8px] w-[81px]">Terminal</span>
        <div className="-mt-[2px] flex h-[33px] w-[90px] items-center bg-[#b4b4b4] pl-[14px] pt-[2px]">
          <FaHammer size={19} color={gray} className="-scale-x-100" />
          <span className="ml-[7px]">Build</span>
        </div>
        <svg width="19" height="19" viewBox="0 0 19 19" fill="none" stroke={gray} strokeWidth="2" className="ml-auto shrink-0">
          <path d="M9.500 1a8.500 8.500 0 0 1 8.500 8.500V18H9.500a8.500 8.500 0 0 1 0-17z" />
        </svg>
        <span className="ml-[7px] mr-[48px] whitespace-nowrap">Event Log</span>
      </div>

      {/* status bar */}
      <div className="flex h-[29px] shrink-0 items-center text-[17px]">
        <svg width="18" height="18" viewBox="0 0 18 18" fill="none" stroke={gray} strokeWidth="1.200" className="ml-[15px] shrink-0">
          <path d="M5 1h12v12H5zM1 5v12h12" />
        </svg>
        <span className="ml-[15px] whitespace-nowrap">NDK Resolution Outcome: Project settings: Gradle model version=5.4.1, NDK version is UNKNOWN (12 minutes ago)</span>
        <div className="ml-auto flex items-center">
          <svg width="17" height="18" viewBox="0 0 17 18" className="shrink-0">
            <path d="M1 8V4a3 3 0 0 1 6 0v3" fill="none" stroke="#555" strokeWidth="1.500" />
            <rect x="4" y="9" width="13" height="9" fill={gray} />
          </svg>
          <div className="ml-[19px]"><Smile /></div>
          <div className="ml-[15px]"><Smile sad /></div>
          <svg width="20" height="22" viewBox="0 0 20 22" fill="#c8c8c8" className="ml-[15px] mr-[10px] shrink-0">
            <circle cx="10" cy="6" r="5.500" /><path d="M0 9h20v3H0zM3 13h14v9H3z" />
          </svg>
        </div>
      </div>
      <div className="h-[2px] shrink-0 bg-[#2b2b2b]" />
    </div>
  )
}
